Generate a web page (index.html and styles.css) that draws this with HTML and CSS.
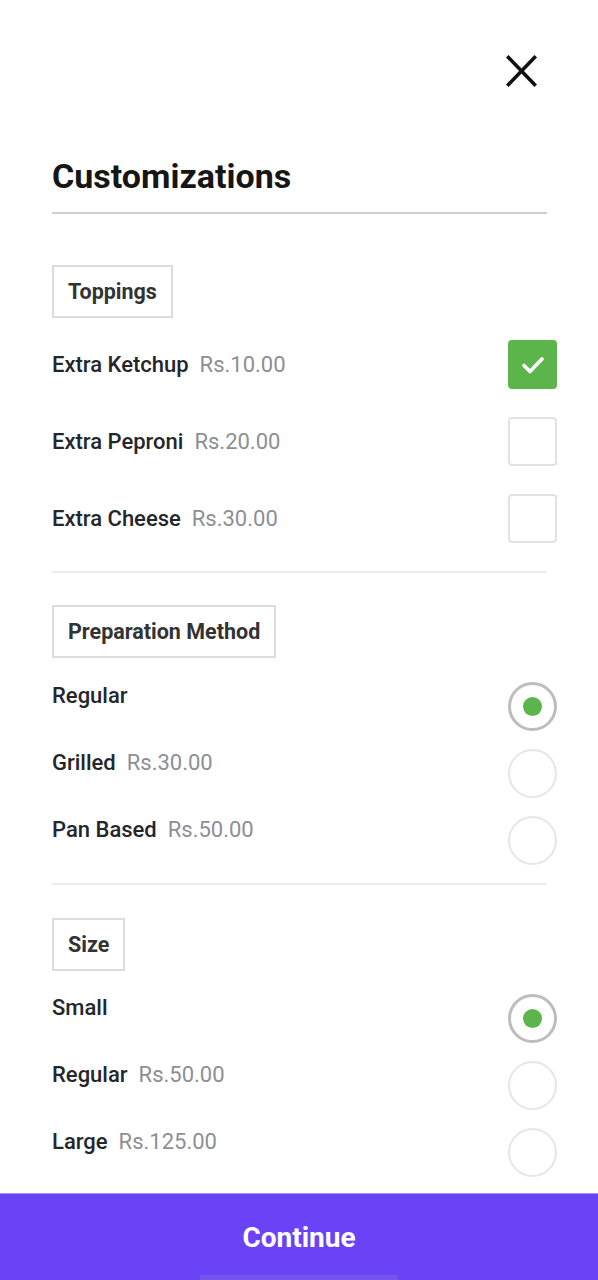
FILE: index.html
```html
<!DOCTYPE html>
<html lang="en">
<head>
<meta charset="utf-8">
<title>Customizations</title>
<link rel="stylesheet" href="styles.css">
</head>
<body>
<div class="page">
  <header class="top">
    <button class="close" aria-label="Close">
      <svg width="31" height="32" viewBox="0 0 31 32"><path d="M2.5 2.5 L28.5 29.5 M28.5 2.5 L2.5 29.5" stroke="#111" stroke-width="3.6" stroke-linecap="square" fill="none"/></svg>
    </button>
  </header>
  <h1 class="title">Customizations</h1>
  <hr class="rule rule-dark">

  <section class="group group-first">
    <div class="tag">Toppings</div>
    <ul class="options checks">
      <li class="opt"><span class="name">Extra Ketchup</span><span class="price">Rs.10.00</span>
        <span class="box on"><svg width="26" height="22" viewBox="0 0 26 22"><path d="M4 11.5 L10 17.5 L22 5" stroke="#fff" stroke-width="3.6" fill="none" stroke-linecap="round" stroke-linejoin="round"/></svg></span></li>
      <li class="opt"><span class="name">Extra Peproni</span><span class="price">Rs.20.00</span><span class="box"></span></li>
      <li class="opt"><span class="name">Extra Cheese</span><span class="price">Rs.30.00</span><span class="box"></span></li>
    </ul>
  </section>
  <hr class="rule rule-light">

  <section class="group group-second">
    <div class="tag">Preparation Method</div>
    <ul class="options radios">
      <li class="opt"><span class="name">Regular</span><span class="radio on"></span></li>
      <li class="opt"><span class="name">Grilled</span><span class="price">Rs.30.00</span><span class="radio"></span></li>
      <li class="opt"><span class="name">Pan Based</span><span class="price">Rs.50.00</span><span class="radio"></span></li>
    </ul>
  </section>
  <hr class="rule rule-light rule-third">

  <section class="group group-third">
    <div class="tag">Size</div>
    <ul class="options radios">
      <li class="opt"><span class="name">Small</span><span class="radio on"></span></li>
      <li class="opt"><span class="name">Regular</span><span class="price">Rs.50.00</span><span class="radio"></span></li>
      <li class="opt"><span class="name">Large</span><span class="price">Rs.125.00</span><span class="radio"></span></li>
    </ul>
  </section>
</div>
<footer class="cta">
  <span class="cta-label">Continue</span>
  <span class="home-bar"></span>
</footer>
</body>
</html>
```
FILE: styles.css
```css
* { box-sizing: border-box; }
html, body { margin: 0; padding: 0; background: #fff; }
body {
  width: 598px;
  font-family: Roboto, "Noto Sans", "Liberation Sans", sans-serif;
  color: #222;
}
.page {
  padding: 55px 41px 0 52px;
  height: 1193px;
}
.top {
  display: flex;
  justify-content: flex-end;
  padding-right: 20px;
  height: 32px;
}
.close {
  border: 0;
  background: none;
  padding: 0;
  width: 31px;
  height: 32px;
  display: block;
  cursor: pointer;
}
.close svg { display: block; }
.title {
  margin: 69px 0 0;
  font-size: 34px;
  line-height: 40px;
  font-weight: 700;
  color: #161616;
}
.rule {
  border: 0;
  margin: 0 10px 0 0;
}
.rule-dark {
  margin-top: 16px;
  height: 2px;
  background: #cfcfcf;
}
.rule-light {
  height: 2px;
  background: #eeeeee;
}
.group-first { padding-top: 51px; padding-bottom: 28px; }
.group-second { padding-top: 32px; padding-bottom: 19px; }
.group-third { padding-top: 33px; }
.tag {
  display: inline-flex;
  align-items: center;
  height: 53px;
  padding: 0 14px;
  border: 2px solid #dcdcdc;
  font-size: 21.5px;
  font-weight: 700;
  color: #333;
}
.options {
  list-style: none;
  margin: 0;
  padding: 0;
}
.opt {
  display: flex;
  font-size: 22px;
  font-weight: 500;
  color: #24262b;
}
.name { white-space: nowrap; }
.price {
  margin-left: 11px;
  font-weight: 400;
  color: #8d8f94;
}
.checks { padding-top: 22px; display: flex; flex-direction: column; gap: 28px; }
.checks .opt { align-items: center; height: 49px; }
.box {
  margin-left: auto;
  width: 49px;
  height: 49px;
  border: 2px solid #e2e2e2;
  border-radius: 4px;
  display: flex;
  align-items: center;
  justify-content: center;
}
.box.on {
  background: #5cb54a;
  border-color: #5cb54a;
}
.radios { padding-top: 24px; display: flex; flex-direction: column; gap: 19px; }
.group-third .radios { padding-top: 23px; }
.radios .opt { align-items: flex-start; height: 48px; line-height: 28px; }
.radio {
  margin-left: auto;
  width: 49px;
  height: 49px;
  border: 2px solid #e6e6e6;
  border-radius: 50%;
  display: flex;
  align-items: center;
  justify-content: center;
}
.radio.on { border: 3px solid #bdbdbd; }
.radio.on::after {
  content: "";
  width: 19px;
  height: 19px;
  border-radius: 50%;
  background: #5cb54a;
}
.cta {
  position: relative;
  height: 87px;
  background: #6943f5;
  border-top: 1px solid #a898f0;
  display: flex;
  align-items: center;
  justify-content: center;
}
.cta-label {
  color: #fff;
  font-size: 28px;
  font-weight: 700;
}
.home-bar {
  position: absolute;
  left: 200px;
  bottom: 0;
  width: 198px;
  height: 5px;
  background: #7455ec;
}
```
